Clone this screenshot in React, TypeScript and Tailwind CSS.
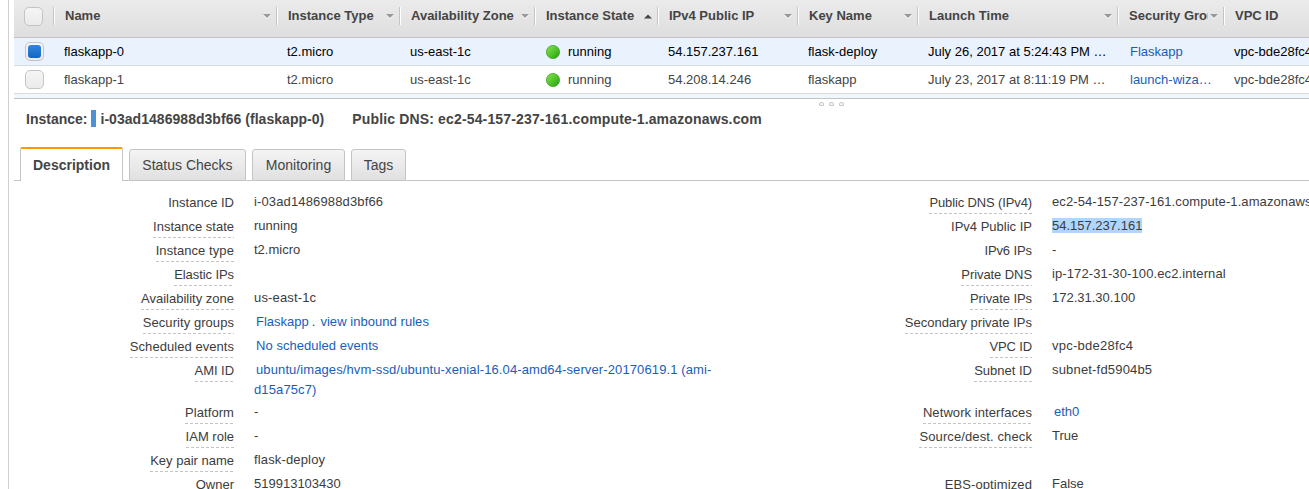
import type { ReactNode } from "react";

type Sort = "down" | "up" | "none";

const columns: { title: string; sort: Sort }[] = [
  { title: "Name", sort: "down" },
  { title: "Instance Type", sort: "down" },
  { title: "Availability Zone", sort: "down" },
  { title: "Instance State", sort: "up" },
  { title: "IPv4 Public IP", sort: "down" },
  { title: "Key Name", sort: "down" },
  { title: "Launch Time", sort: "down" },
  { title: "Security Groups", sort: "down" },
  { title: "VPC ID", sort: "none" },
];

const instances = [
  {
    name: "flaskapp-0",
    ip: "54.157.237.161",
    keyName: "flask-deploy",
    launch: "July 26, 2017 at 5:24:43 PM UTC-4",
    group: "Flaskapp",
    selected: true,
  },
  {
    name: "flaskapp-1",
    ip: "54.208.14.246",
    keyName: "flaskapp",
    launch: "July 23, 2017 at 8:11:19 PM UTC-4",
    group: "launch-wizard-1",
    selected: false,
  },
];

const gridCols =
  "grid grid-cols-[40px_223px_123px_135px_123px_140px_120px_200px_106px_140px]";

function Checkbox({ checked = false }: { checked?: boolean }) {
  return (
    <span className="flex size-[19px] shrink-0 items-center justify-center rounded-[5px] border border-[#c4c4c4] bg-linear-to-b from-[#f5f5f5] to-[#ebebeb]">
      {checked && (
        <span className="size-[13px] rounded-[3px] bg-linear-to-b from-[#2f86dc] to-[#1466be]" />
      )}
    </span>
  );
}

function SortArrow({ sort }: { sort: Sort }) {
  if (sort === "none") return null;
  return (
    <svg viewBox="0 0 8 5" className="h-[5px] w-2 shrink-0">
      {sort === "down" ? (
        <>
          <path d="M0 1h8L4 5z" fill="#fff" />
          <path d="M0 0h8L4 4z" fill="#999" />
        </>
      ) : (
        <path d="M0 4.5h8L4 0.5z" fill="#444" />
      )}
    </svg>
  );
}

function RunningDot() {
  return (
    <svg viewBox="0 0 14 14" className="size-[14px] shrink-0">
      <defs>
        <linearGradient id="dot" x1="0" y1="0" x2="1" y2="1">
          <stop offset="0" stopColor="#8be34f" />
          <stop offset="0.55" stopColor="#4fc32a" />
          <stop offset="1" stopColor="#1f9a10" />
        </linearGradient>
      </defs>
      <circle cx="7" cy="7" r="6.6" fill="url(#dot)" stroke="#44a62c" strokeWidth="0.8" />
    </svg>
  );
}

function Cell({ children, className = "pl-[10px]" }: { children: ReactNode; className?: string }) {
  return <div className={`flex min-w-0 items-center pr-[9px] ${className}`}>{children}</div>;
}

function Divider() {
  return (
    <span className="-mr-px h-[18px] w-[2px] shrink-0 border-l border-[#c4c4c4] bg-white" />
  );
}

function InstanceTable() {
  return (
    <section className="ml-[14px] w-[1350px]">
      <div
        className={`${gridCols} h-[38px] border-b border-[#c2c2c2] bg-linear-to-b from-[#ebebeb] to-[#dedede] font-bold`}
      >
        <div className="mt-[7px] flex h-[19px] justify-between pl-[10px]">
          <Checkbox />
          <Divider />
        </div>
        {columns.map((c) => (
          <div key={c.title} className="mt-[7px] flex h-[18px] min-w-0 items-center pl-[11px]">
            <span className="min-w-0 grow overflow-hidden whitespace-nowrap">{c.title}</span>
            <span className="ml-[2px] mr-[5px]">
              <SortArrow sort={c.sort} />
            </span>
            <Divider />
          </div>
        ))}
      </div>
      {instances.map((row) => (
        <div
          key={row.name}
          className={`${gridCols} h-7 border-b border-[#d9d9e0] ${
            row.selected ? "bg-[#eaf2fe] text-black" : "bg-white"
          }`}
        >
          <div className="flex items-center pl-[11px]">
            <Checkbox checked={row.selected} />
          </div>
          <Cell>{row.name}</Cell>
          <Cell>t2.micro</Cell>
          <Cell>us-east-1c</Cell>
          <Cell className="gap-2 pl-[11px]">
            <RunningDot />
            running
          </Cell>
          <Cell>{row.ip}</Cell>
          <Cell>{row.keyName}</Cell>
          <Cell>
            <span className="truncate">{row.launch}</span>
          </Cell>
          <Cell className="pl-[12px] text-[#1b5cb8]">
            <span className="truncate">{row.group}</span>
          </Cell>
          <Cell>vpc-bde28fc4</Cell>
        </div>
      ))}
      <div className="h-[5px] border-b border-[#c4c4c4] bg-[#f0f8fd]" />
    </section>
  );
}

function Grip() {
  return (
    <div className="flex h-[11px] gap-[5px] pl-[819px] pt-[3px]">
      {[0, 1, 2].map((i) => (
        <span
          key={i}
          className="h-[4px] w-[5px] rounded-t-[2px] border border-[#cacaca] bg-[#f4f4f4]"
        />
      ))}
    </div>
  );
}

function Tab({ label, active = false, width }: { label: string; active?: boolean; width: string }) {
  return active ? (
    <div
      className={`flex h-[34px] items-center justify-center rounded-t-[2px] border-x border-t-2 border-x-[#c4c4c4] border-t-[#f90] bg-white font-bold ${width}`}
    >
      {label}
    </div>
  ) : (
    <div
      className={`flex h-8 items-center justify-center rounded-t-[3px] border border-[#c4c4c4] bg-linear-to-b from-[#f4f4f4] to-[#e0e0e0] pb-px ${width}`}
    >
      {label}
    </div>
  );
}

type Detail = { label: string; value?: ReactNode; plain?: boolean; tracking?: string } | null;

const link = "ml-[2px] text-[#1b5cb8]";

const details: { left: Detail; right: Detail; tall?: boolean }[] = [
  {
    left: {
      label: "Instance ID",
      value: <span className="tracking-[0.14px]">i-03ad1486988d3bf66</span>,
      plain: true,
    },
    right: {
      label: "Public DNS (IPv4)",
      value: <span className="tracking-[0.1px]">ec2-54-157-237-161.compute-1.amazonaws.com</span>,
      tracking: "tracking-[-0.13px]",
    },
  },
  {
    left: { label: "Instance state", value: "running" },
    right: {
      label: "IPv4 Public IP",
      value: <span className="bg-[#b1d6fd]">54.157.237.161</span>,
      plain: true,
    },
  },
  {
    left: { label: "Instance type", value: "t2.micro", tracking: "tracking-[0.08px]" },
    right: { label: "IPv6 IPs", value: "-", plain: true, tracking: "tracking-[-0.1px]" },
  },
  {
    left: { label: "Elastic IPs", tracking: "tracking-[-0.08px]" },
    right: {
      label: "Private DNS",
      value: <span className="tracking-[0.11px]">ip-172-31-30-100.ec2.internal</span>,
      tracking: "tracking-[-0.08px]",
    },
  },
  {
    left: {
      label: "Availability zone",
      value: <span className="tracking-[0.15px]">us-east-1c</span>,
    },
    right: { label: "Private IPs", value: "172.31.30.100", tracking: "tracking-[-0.08px]" },
  },
  {
    left: {
      label: "Security groups",
      value: (
        <>
          <a className={link}>Flaskapp</a>
          <span className="ml-[3px]">.</span>
          <a className="ml-[5px] tracking-[0.05px] text-[#1b5cb8]">view inbound rules</a>
        </>
      ),
      tracking: "tracking-[0.06px]",
    },
    right: { label: "Secondary private IPs" },
  },
  {
    left: {
      label: "Scheduled events",
      value: <a className={`${link} tracking-[0.05px]`}>No scheduled events</a>,
      tracking: "tracking-[0.05px]",
    },
    right: {
      label: "VPC ID",
      value: <span className="tracking-[0.26px]">vpc-bde28fc4</span>,
      tracking: "tracking-[-0.15px]",
    },
  },
  {
    left: {
      label: "AMI ID",
      value: (
        <a className={`${link} tracking-[0.115px]`}>
          ubuntu/images/hvm-ssd/ubuntu-xenial-16.04-amd64-server-20170619.1 (ami-
          <br />
          d15a75c7)
        </a>
      ),
      tracking: "tracking-[-0.05px]",
    },
    right: {
      label: "Subnet ID",
      value: <span className="tracking-[0.18px]">subnet-fd5904b5</span>,
    },
    tall: true,
  },
  {
    left: { label: "Platform", value: "-", tracking: "tracking-[0.06px]" },
    right: {
      label: "Network interfaces",
      value: <a className={link}>eth0</a>,
      tracking: "tracking-[0.08px]",
    },
  },
  {
    left: { label: "IAM role", value: "-" },
    right: { label: "Source/dest. check", value: "True", tracking: "tracking-[0.11px]" },
  },
  {
    left: {
      label: "Key pair name",
      value: <span className="tracking-[0.15px]">flask-deploy</span>,
    },
    right: null,
  },
  {
    left: { label: "Owner", value: "519913103430" },
    right: { label: "EBS-optimized", value: "False", tracking: "tracking-[0.1px]" },
  },
];

function DetailPair({ item }: { item: Detail }) {
  return (
    <>
      <div className="flex items-start justify-end pr-5 pt-1">
        {item && (
          <span
            className={`flex h-5 flex-col whitespace-nowrap leading-[17px] ${item.tracking ?? ""}`}
          >
            {item.label}
            {!item.plain && (
              <span className="mt-[2px] h-px w-full shrink-0 bg-[repeating-linear-gradient(to_right,#c4c4c4_0,#c4c4c4_3px,transparent_3px,transparent_5px)]" />
            )}
          </span>
        )}
      </div>
      <div className="whitespace-nowrap pt-[2px] leading-5">{item?.value}</div>
    </>
  );
}

function Details() {
  return (
    <section className="pt-[9px] text-[#3c3c3c]">
      {details.map((row, i) => (
        <div
          key={i}
          className={`grid grid-cols-[245px_558px_240px_300px] ${row.tall ? "h-[42px]" : "h-6"}`}
        >
          <DetailPair item={row.left} />
          <DetailPair item={row.right} />
        </div>
      ))}
    </section>
  );
}

export default function App() {
  return (
    <div className="h-[489px] w-full overflow-hidden bg-white pl-2 font-['Liberation_Sans',Arial,sans-serif] text-[13px] leading-[18px] text-[#444]">
      <div className="h-full overflow-hidden border-l border-[#d0d0d0]">
        <div className="-ml-[9px]">
          <InstanceTable />
          <Grip />
          <div className="flex h-[37px] items-start pl-[26px] text-[14px] font-bold">
            <span>Instance:</span>
            <span className="ml-[4px] h-[17px] w-[5px] bg-[#4d93d4]" />
            <span className="ml-[4px] tracking-[0.04px]">i-03ad1486988d3bf66 (flaskapp-0)</span>
            <span className="ml-[28px] tracking-[0.15px]">
              Public DNS: ec2-54-157-237-161.compute-1.amazonaws.com
            </span>
          </div>
          <div className="ml-[14px] flex h-[34px] items-end text-[14px]">
            <span className="w-[6px] border-b border-[#c4c4c4]" />
            <Tab label="Description" active width="w-[103px]" />
            <span className="w-[6px] border-b border-[#c4c4c4]" />
            <Tab label="Status Checks" width="w-[117px]" />
            <span className="w-[6px] border-b border-[#c4c4c4]" />
            <Tab label="Monitoring" width="w-[93px]" />
            <span className="w-[6px] border-b border-[#c4c4c4]" />
            <Tab label="Tags" width="w-[55px]" />
            <span className="grow border-b border-[#c4c4c4]" />
          </div>
          <div className="pl-[9px]">
            <Details />
          </div>
        </div>
      </div>
    </div>
  );
}
